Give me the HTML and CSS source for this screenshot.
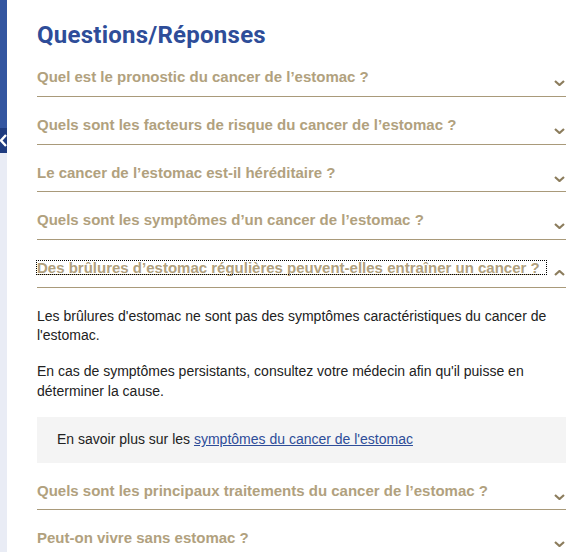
FILE: index.html
```html
<!DOCTYPE html>
<html lang="fr">
<head>
<meta charset="utf-8">
<title>Questions/Réponses</title>
<link rel="stylesheet" href="styles.css">
</head>
<body>
<div class="page">
  <aside class="side">
    <div class="side-top"></div>
    <div class="side-tab">
      <svg width="7" height="25" viewBox="0 0 7 25"><polyline points="6,7 1,12.5 6,18" fill="none" stroke="#fff" stroke-width="2.4"/></svg>
    </div>
    <div class="side-rest"></div>
  </aside>
  <main class="main">
    <h2 class="title">Questions/Réponses</h2>
    <div class="faq">
      <div class="item">
        <button class="q"><span class="q-text">Quel est le pronostic du cancer de l’estomac ?</span><svg class="chev" width="11" height="6" viewBox="0 0 11 6"><polyline points="1,1 5.5,5 10,1"/></svg></button>
      </div>
      <div class="item">
        <button class="q"><span class="q-text">Quels sont les facteurs de risque du cancer de l’estomac ?</span><svg class="chev" width="11" height="6" viewBox="0 0 11 6"><polyline points="1,1 5.5,5 10,1"/></svg></button>
      </div>
      <div class="item">
        <button class="q"><span class="q-text">Le cancer de l’estomac est-il héréditaire ?</span><svg class="chev" width="11" height="6" viewBox="0 0 11 6"><polyline points="1,1 5.5,5 10,1"/></svg></button>
      </div>
      <div class="item">
        <button class="q"><span class="q-text">Quels sont les symptômes d’un cancer de l’estomac ?</span><svg class="chev" width="11" height="6" viewBox="0 0 11 6"><polyline points="1,1 5.5,5 10,1"/></svg></button>
      </div>
      <div class="item open">
        <button class="q"><span class="q-text focused">Des brûlures d’estomac régulières peuvent-elles entraîner un cancer ?</span><svg class="chev up" width="11" height="6" viewBox="0 0 11 6"><polyline points="1,5 5.5,1 10,5"/></svg></button>
        <div class="answer">
          <p>Les brûlures d'estomac ne sont pas des symptômes caractéristiques du cancer de l'estomac.</p>
          <p>En cas de symptômes persistants, consultez votre médecin afin qu'il puisse en déterminer la cause.</p>
          <p class="more">En savoir plus sur les <a href="#">symptômes du cancer de l'estomac</a></p>
        </div>
      </div>
      <div class="item">
        <button class="q"><span class="q-text">Quels sont les principaux traitements du cancer de l’estomac ?</span><svg class="chev" width="11" height="6" viewBox="0 0 11 6"><polyline points="1,1 5.5,5 10,1"/></svg></button>
      </div>
      <div class="item">
        <button class="q"><span class="q-text">Peut-on vivre sans estomac ?</span><svg class="chev" width="11" height="6" viewBox="0 0 11 6"><polyline points="1,1 5.5,5 10,1"/></svg></button>
      </div>
    </div>
  </main>
</div>
</body>
</html>
```
FILE: styles.css
```css
html, body {
  margin: 0;
  padding: 0;
  background: #fff;
}
body {
  font-family: "Liberation Sans", Arial, sans-serif;
  color: #222;
  overflow: hidden;
}
.page {
  display: flex;
  min-height: 552px;
}
.side {
  width: 7px;
  flex: 0 0 7px;
  display: flex;
  flex-direction: column;
}
.side-top {
  height: 128px;
  background: #3456a0;
}
.side-tab {
  height: 25px;
  background: #1f3c80;
  overflow: hidden;
}
.side-tab svg {
  display: block;
}
.side-rest {
  flex: 1;
  background: #e9ecf5;
}
.main {
  flex: 1;
  padding: 0 13px 0 30px;
}
.title {
  margin: 0;
  padding-top: 22px;
  height: 27px;
  font-family: Roboto, "Liberation Sans", sans-serif;
  font-weight: 700;
  font-size: 24px;
  line-height: 27px;
  letter-spacing: 0.25px;
  color: #2e4d99;
}
.q {
  display: flex;
  justify-content: space-between;
  align-items: flex-end;
  width: 100%;
  margin: 0;
  padding: 17px 0 7.75px;
  border: 0;
  border-bottom: 1px solid #a99a7a;
  background: none;
  font-family: "Liberation Sans", Arial, sans-serif;
  font-weight: 700;
  font-size: 15px;
  line-height: 22px;
  color: #b1a17e;
  text-align: left;
  cursor: pointer;
}
.q-text.focused {
  display: inline-block;
  line-height: 13px;
  margin: 4px 0 5px;
  padding-right: 6px;
  text-decoration: underline;
  outline: 1px dotted #000;
}
.chev {
  flex: 0 0 auto;
  display: block;
  margin: 0 1px 2px 0;
}
.chev polyline {
  fill: none;
  stroke: #8c7d5d;
  stroke-width: 2.2;
}
.chev.up {
  margin-bottom: 3px;
}
.answer {
  padding-top: 19px;
  font-size: 14px;
  line-height: 19.6px;
  color: #222;
}
.answer p {
  margin: 0 0 16px;
}
.answer .more {
  margin: 0;
  padding: 13px 20px;
  background: #f4f4f4;
}
.more a {
  color: #2e4d99;
  text-decoration: underline;
}
```
